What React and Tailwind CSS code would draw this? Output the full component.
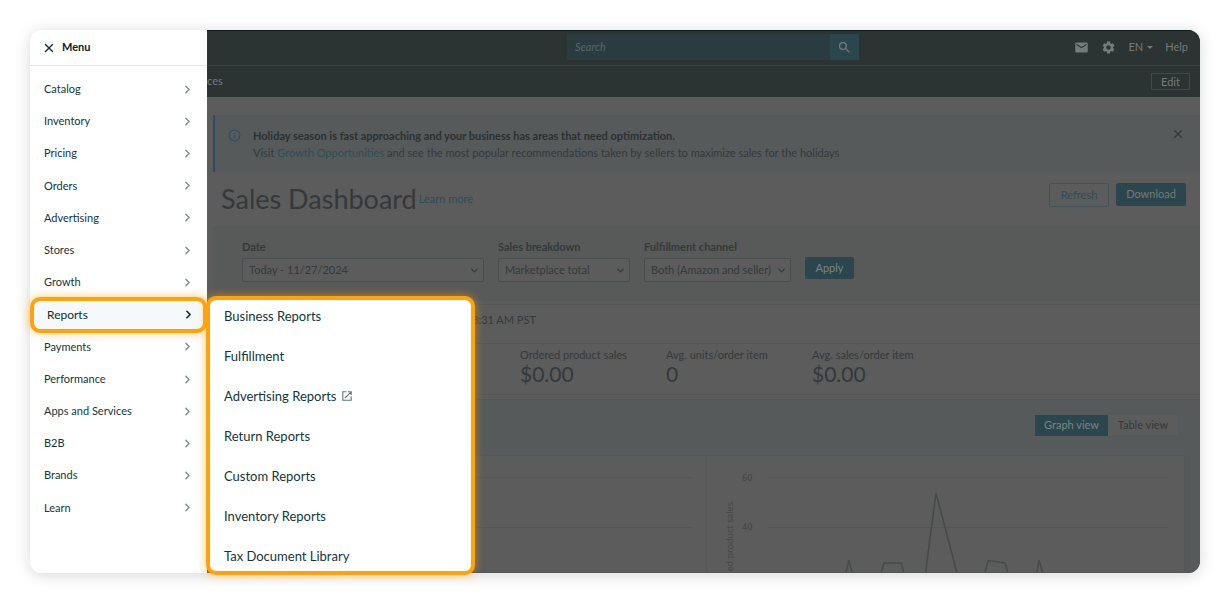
import { useState } from 'react';
import { ChevronDown, ChevronRight, Info, X } from 'lucide-react';
import { MdEmail, MdSearch, MdSettings } from 'react-icons/md';

const MENU = [
  'Catalog', 'Inventory', 'Pricing', 'Orders', 'Advertising', 'Stores', 'Growth',
  'Reports', 'Payments', 'Performance', 'Apps and Services', 'B2B', 'Brands', 'Learn',
];

const REPORTS = [
  { label: 'Business Reports' },
  { label: 'Fulfillment' },
  { label: 'Advertising Reports', external: true },
  { label: 'Return Reports' },
  { label: 'Custom Reports' },
  { label: 'Inventory Reports' },
  { label: 'Tax Document Library' },
];

const STATS = [
  { label: 'Ordered product sales', value: '$0.00' },
  { label: 'Avg. units/order item', value: '0' },
  { label: 'Avg. sales/order item', value: '$0.00' },
];

function ExternalIcon() {
  return (
    <svg width="10" height="10" viewBox="0 0 10 10" fill="none" stroke="#5f7478" strokeWidth="1.100">
      <path d="M4.500 .8H.8V9.200H9.200V5.500M6 .8H9.200V4M9.200 .8 3 7" />
    </svg>
  );
}

function Sidebar() {
  return (
    <aside className="relative z-10 flex w-[177px] shrink-0 flex-col rounded-l-xl bg-white text-[#12363d]">
      <div className="flex h-9 shrink-0 items-center gap-1.5 border-b border-[#e3e6e6] px-3">
        <button aria-label="Close menu"><X size={14} strokeWidth={2.5} /></button>
        <h2 className="text-[11px] font-bold text-[#0b2228]">Menu</h2>
      </div>
      <nav className="flex flex-1 flex-col pt-[7px] pb-[49px]">
        {MENU.map(item => (
          <div key={item} className="relative flex flex-1">
            {item === 'Reports' ? (
              <button className="absolute inset-x-0 -inset-y-0.5 flex items-center justify-between rounded-[10px] border-4 border-[#ffa30d] bg-[#f5f9fb] pr-2 pl-[13px] text-[12px] text-[#0d2c33] shadow-[0_0_8px_rgba(255,163,13,0.6)]">
                {item}
                <ChevronRight size={13} strokeWidth={3} />
              </button>
            ) : (
              <button className="flex flex-1 items-center justify-between pr-[13px] pl-3.5 text-[11px]">
                {item}
                <ChevronRight size={13} strokeWidth={2.5} className="text-[#7b8c8f]" />
              </button>
            )}
          </div>
        ))}
      </nav>
    </aside>
  );
}

function Flyout() {
  return (
    <nav className="absolute top-[266px] -bottom-0.5 left-[176px] z-20 flex w-[269px] flex-col gap-5 rounded-[10px] border-4 border-[#ffa30d] bg-white pt-1.5 pl-3.5 text-[13px] leading-5 text-[#12363d] shadow-[0_0_10px_rgba(255,163,13,0.6)]">
      {REPORTS.map(r => (
        <a key={r.label} href="#" className="flex items-center gap-1.5">
          {r.label}
          {r.external && <ExternalIcon />}
        </a>
      ))}
    </nav>
  );
}

function TopBar() {
  return (
    <header className="shrink-0 border-t border-[#0b1b1c] bg-[#2b3333] text-[11px] text-[#757a7a]">
      <div className="flex h-[35px] items-center border-b border-[#384141] pr-3 pb-0.5">
        <form className="ml-[360px] flex h-[26px] w-[292px]" onSubmit={e => e.preventDefault()}>
          <input
            type="text"
            aria-label="Search"
            placeholder="Search"
            className="min-w-0 flex-1 bg-[#2a3c40] px-2 italic placeholder:text-[#53686c] focus:outline-none"
          />
          <button aria-label="Submit search" className="flex w-[29px] items-center justify-center bg-[#2c464d]">
            <MdSearch size={15} />
          </button>
        </form>
        <div className="ml-auto flex items-center gap-3">
          <button aria-label="Messages"><MdEmail size={15} /></button>
          <button aria-label="Settings"><MdSettings size={15} /></button>
          <button className="flex items-center gap-1">
            EN
            <svg width="6" height="3" viewBox="0 0 6 3" fill="currentColor"><path d="M0 0H6L3 3Z" /></svg>
          </button>
          <a href="#">Help</a>
        </div>
      </div>
      <div className="flex h-[31px] items-center justify-between pr-2.5">
        <span>ces</span>
        <button className="h-[17px] w-[39px] border border-[#414a4a] text-[11px] leading-none">Edit</button>
      </div>
    </header>
  );
}

function Field({ id, label, value, className }) {
  return (
    <div className={className}>
      <label htmlFor={id} className="block text-[11px] leading-4 font-bold">{label}</label>
      <div className="relative mt-[3px]">
        <select id={id} className="h-6 w-full appearance-none rounded-xs border border-[#4a4d4e] bg-[#5c5c5c] pl-1.5 text-[11px]">
          <option>{value}</option>
        </select>
        <ChevronDown size={11} strokeWidth={3} className="pointer-events-none absolute top-[7px] right-1" />
      </div>
    </div>
  );
}

function Charts() {
  return (
    <div className="mr-[15px] flex flex-1 overflow-hidden border border-[#555757] bg-[#5c5c5c]">
      <div className="w-[493px] border-r border-[#555757] pt-[21px] pr-3.5">
        <div className="h-[50px] border-t border-[#555757]" />
        <div className="border-t border-[#555757]" />
      </div>
      <div className="flex flex-1 pl-4">
        <div className="flex w-3.5 items-end justify-center">
          <span className="rotate-180 font-['Noto_Sans',sans-serif] text-[9px] leading-3 whitespace-nowrap text-[#454849] [writing-mode:vertical-rl]">ed product sales</span>
        </div>
        <svg viewBox="0 0 440 117" className="h-[117px] flex-1 overflow-visible" preserveAspectRatio="xMinYMin meet">
          <g fill="#414445" fontSize="9" className="font-['Noto_Sans',sans-serif]">
            <text x="5" y="25">60</text>
            <text x="5" y="74">40</text>
          </g>
          <path d="M32 21.5H431M32 71.5H431" stroke="#555757" fill="none" />
          <path
            d="M108 121 112 104 116 121M143 121 147 107H164L168 121M188 121 199 37 221 121M247 121 251 104.500 268 107 272 121M299 121 302 104 307 121"
            fill="none"
            stroke="#464a4a"
            strokeWidth="1.5"
          />
        </svg>
      </div>
    </div>
  );
}

export default function App() {
  const [view, setView] = useState('graph');
  const on = 'bg-[#2c464d] text-[#7a8485]';
  const off = 'bg-[#5c5c5c] text-[#34393b]';

  return (
    <div className="h-screen min-h-[603px] bg-white p-[30px] font-[Lato,sans-serif]">
      <div className="relative flex h-full rounded-xl shadow-[0_2px_16px_rgba(0,0,0,0.16)]">
        <Sidebar />
        <Flyout />
        <main className="flex min-w-0 flex-1 flex-col overflow-hidden rounded-r-xl bg-[#5c5c5c] text-[11px] text-[#34393b]">
          <TopBar />
          <div className="flex min-h-0 flex-1 flex-col pt-[18px] pl-1.5">
            <section className="flex h-[57px] shrink-0 items-start border-l-2 border-[#2f4b63] bg-[#565a5b] pt-3 pr-[15px] pl-[13px]">
              <Info size={13} className="mt-0.5 mr-3 shrink-0 text-[#2f4b63]" />
              <div className="leading-[17px]">
                <p className="font-bold text-[#2c3032]">Holiday season is fast approaching and your business has areas that need optimization.</p>
                <p>Visit <a href="#" className="text-[#2e4d54]">Growth Opportunities</a> and see the most popular recommendations taken by sellers to maximize sales for the holidays</p>
              </div>
              <button aria-label="Dismiss" className="ml-auto"><X size={14} strokeWidth={2} /></button>
            </section>

            <div className="flex h-[54px] shrink-0 items-center gap-0.5 pr-3.5 pl-2">
              <h1 className="text-[27px] leading-8">Sales Dashboard</h1>
              <a href="#" className="text-[#2e4d54]">Learn more</a>
              <div className="mb-2 ml-auto flex gap-[7px]">
                <button className="h-6 w-[60px] rounded-xs border border-[#3f5458] text-[#2e4d54]">Refresh</button>
                <button className="h-[23px] w-[70px] rounded-xs bg-[#2c464d] text-[#75797a]">Download</button>
              </div>
            </div>

            <section className="flex h-[75px] shrink-0 items-start gap-3.5 bg-[#585a59] pt-[13px] pl-[29px]">
              <Field id="date" label="Date" value="Today - 11/27/2024" className="w-[242px]" />
              <Field id="breakdown" label="Sales breakdown" value="Marketplace total" className="w-[132px]" />
              <Field id="channel" label="Fulfillment channel" value="Both (Amazon and seller)" className="w-[147px]" />
              <button className="mt-[18px] h-[22px] w-[49px] rounded-xs bg-[#2c464d] text-[#7a8485]">Apply</button>
            </section>

            <div className="mt-[3px] flex h-[39px] shrink-0 items-center border-t border-[#555757] pl-[259px]">
              <span className="pb-2">8:31 AM PST</span>
            </div>
            <section className="flex h-[52px] shrink-0 border-y border-[#555757] pt-1 pl-[307px]">
              {STATS.map(s => (
                <div key={s.label} className="w-[146px]">
                  <p className="leading-[14px]">{s.label}</p>
                  <p className="text-[21px] leading-6">{s.value}</p>
                </div>
              ))}
            </section>

            <section className="mt-1 flex min-h-0 flex-1 flex-col border-t border-[#505556] bg-[#565a5b]">
              <div className="flex h-[55px] shrink-0 items-start justify-end pt-[15px] pr-[22px]">
                <button onClick={() => setView('graph')} className={`h-[21px] w-[73px] ${view === 'graph' ? on : off}`}>Graph view</button>
                <button onClick={() => setView('table')} className={`h-5 w-[70px] ${view === 'table' ? on : off}`}>Table view</button>
              </div>
              <Charts />
            </section>
          </div>
        </main>
      </div>
    </div>
  );
}
